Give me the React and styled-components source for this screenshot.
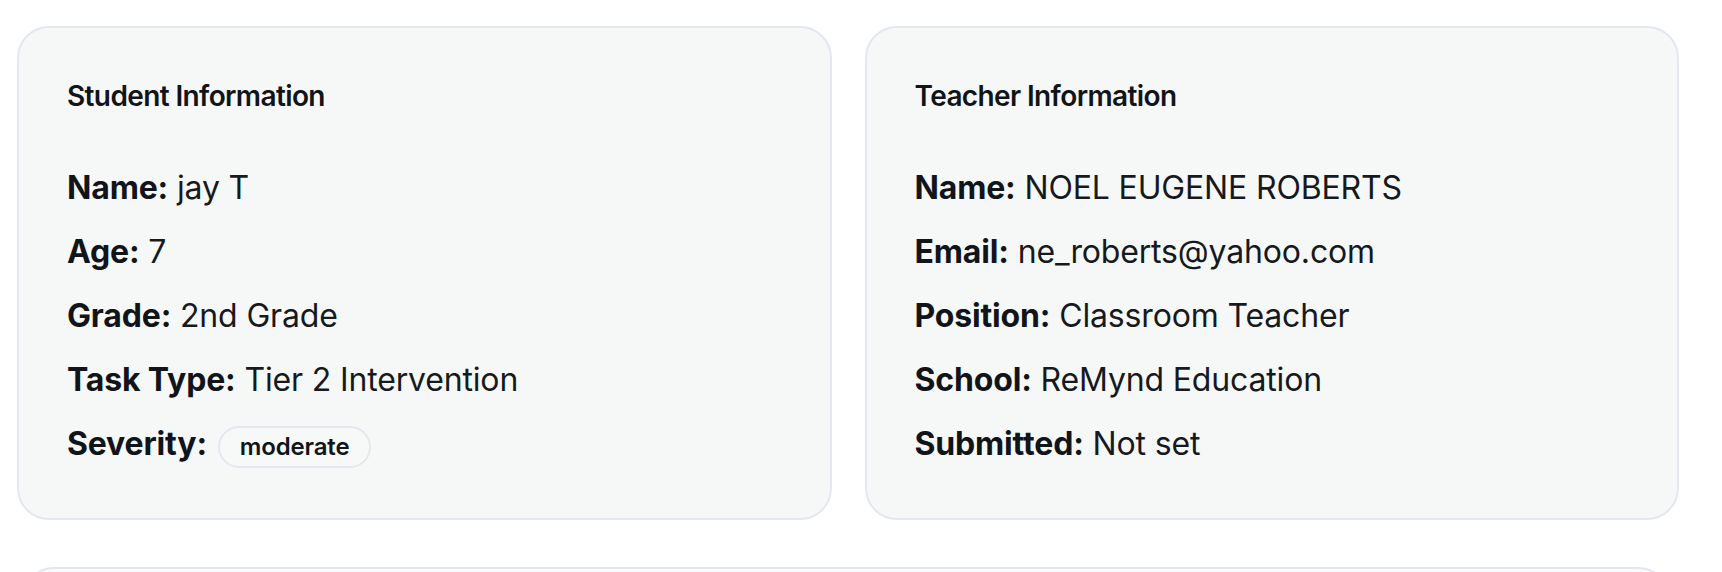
import styled, { createGlobalStyle } from "styled-components";

const GlobalStyle = createGlobalStyle`
  html, body {
    margin: 0;
    padding: 0;
    background: #ffffff;
    overflow: hidden;
  }
  body {
    font-family: Inter, "Noto Sans", "Liberation Sans", sans-serif;
    color: #111418;
  }
`;

const student = [
  { label: "Name", value: "jay T" },
  { label: "Age", value: "7" },
  { label: "Grade", value: "2nd Grade" },
  { label: "Task Type", value: "Tier 2 Intervention" },
  { label: "Severity", badge: "moderate" },
];

const teacher = [
  { label: "Name", value: "NOEL EUGENE ROBERTS" },
  { label: "Email", value: "ne_roberts@yahoo.com" },
  { label: "Position", value: "Classroom Teacher" },
  { label: "School", value: "ReMynd Education" },
  { label: "Submitted", value: "Not set" },
];

export default function App() {
  return (
    <>
      <GlobalStyle />
      <Page>
        <Grid>
          <InfoCard title="Student Information" rows={student} />
          <InfoCard title="Teacher Information" rows={teacher} />
        </Grid>
        <NextCard />
      </Page>
    </>
  );
}

function InfoCard({ title, rows }) {
  return (
    <Card>
      <CardTitle>{title}</CardTitle>
      <List>
        {rows.map((r) => (
          <Row key={r.label}>
            <Label>{r.label}:</Label>{" "}
            {r.badge ? <Badge>{r.badge}</Badge> : r.value}
          </Row>
        ))}
      </List>
    </Card>
  );
}

const Page = styled.div`
  padding: 26px 43px 0 17px;
`;

const Grid = styled.div`
  display: grid;
  grid-template-columns: 1fr 1fr;
  gap: 33px;
`;

const Card = styled.section`
  background: #f6f8f8;
  border: 2px solid #e3e8ee;
  border-radius: 32px;
  padding: 48px 48px 50px;
`;

const CardTitle = styled.h3`
  margin: 0 0 48px;
  font-size: 28px;
  line-height: 40px;
  font-weight: 600;
  letter-spacing: -0.022em;
  color: #111418;
`;

const List = styled.div`
  display: flex;
  flex-direction: column;
  gap: 16px;
`;

const Row = styled.p`
  margin: 0;
  font-size: 32px;
  line-height: 48px;
  letter-spacing: -0.005em;
  color: #16191d;
`;

const Label = styled.strong`
  font-weight: 700;
  color: #111418;
`;

const Badge = styled.span`
  display: inline-block;
  margin-left: 2px;
  padding: 3px 20px;
  border: 2px solid #e3e8ee;
  border-radius: 999px;
  background: #f7f9f9;
  font-size: 24px;
  line-height: 32px;
  font-weight: 600;
  color: #111418;
`;

const NextCard = styled.section`
  margin: 47px 9px 0 5px;
  height: 200px;
  background: #f9fafb;
  border: 2px solid #e3e8ee;
  border-radius: 32px;
`;
